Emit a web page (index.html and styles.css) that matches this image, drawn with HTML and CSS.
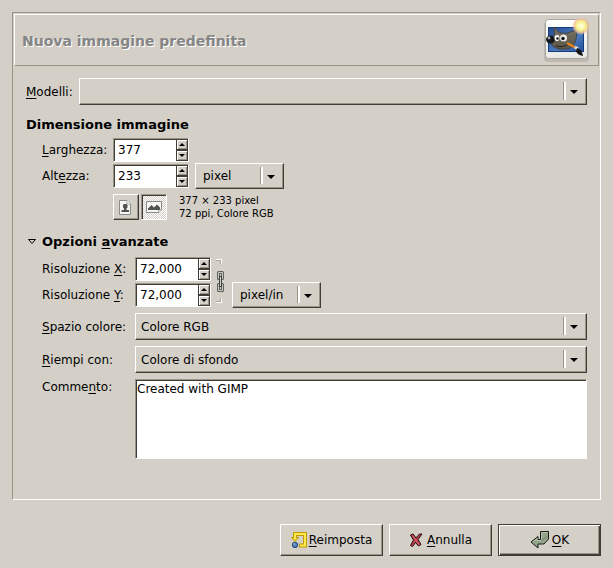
FILE: index.html
```html
<!DOCTYPE html>
<html lang="it">
<head>
<meta charset="utf-8">
<meta name="viewport" content="width=device-width, initial-scale=1">
<title>Nuova immagine predefinita</title>
<link rel="stylesheet" href="styles.css">
</head>
<body>
<form class="dialog">
  <main class="frame">
    <header class="header">
      <h1>Nuova immagine predefinita</h1>
      <svg class="logo" viewBox="0 0 46 46" aria-hidden="true">
        <defs>
          <linearGradient id="paper" x1="0" y1="0" x2="0" y2="1"><stop offset="0" stop-color="#fff"/><stop offset="1" stop-color="#e8e8e6"/></linearGradient>
          <linearGradient id="sky" x1="0" y1="0" x2="1" y2="1"><stop offset="0" stop-color="#244c8e"/><stop offset=".6" stop-color="#4a7ac0"/><stop offset="1" stop-color="#24509a"/></linearGradient>
          <linearGradient id="fur" x1="0" y1="0" x2="0" y2="1"><stop offset="0" stop-color="#7a7466"/><stop offset="1" stop-color="#5a5549"/></linearGradient>
          <radialGradient id="glow"><stop offset="0" stop-color="#fffff0"/><stop offset=".5" stop-color="#f8f48a"/><stop offset=".78" stop-color="#f0c090" stop-opacity=".8"/><stop offset="1" stop-color="#f5c9b0" stop-opacity="0"/></radialGradient>
        </defs>
        <rect x="0" y="3" width="45" height="41" rx="4" fill="#77736b" opacity=".25"/>
        <rect x="1.500" y="1.500" width="42" height="39" rx="3" fill="url(#paper)" stroke="#aaa69f"/>
        <rect x="4.500" y="9.500" width="35" height="24" fill="url(#sky)" stroke="#173b78"/>
        <path d="M10 9L15 14.500Q22 17 28 13.500L32 12.500Q34 22 28 29Q24 32 14 31Q9 29 6 25L8 19L10.500 17Z" fill="url(#fur)" stroke="#3a362e" stroke-width=".7"/>
        <ellipse cx="6.500" cy="21.500" rx="4.500" ry="4" fill="#15181d"/><circle cx="5" cy="20" r="1.400" fill="#a8adb4"/>
        <ellipse cx="13" cy="20" rx="2.500" ry="3" fill="#fff"/><circle cx="13.500" cy="20.500" r="1.300" fill="#111"/>
        <circle cx="19.500" cy="20" r="3.500" fill="#eee"/><circle cx="19" cy="20.500" r="1.700" fill="#111"/>
        <path d="M12 28Q20 30 26 25" fill="none" stroke="#292620"/>
        <path d="M23 25L33 30.500" stroke="#e98520" stroke-width="2"/>
        <path d="M31 29L34 31" stroke="#ddd" stroke-width="3"/>
        <path d="M33 30Q38 31 39 38Q33 37 32 33Z" fill="#151515"/>
        <circle cx="37" cy="8" r="9" fill="url(#glow)"/>
      </svg>
    </header>

    <div class="content">
      <div class="field template">
        <label for="template"><u>M</u>odelli:</label>
        <span class="combo grow"><select id="template"><option></option></select></span>
      </div>

      <h2 class="size-title">Dimensione immagine</h2>
      <div class="rows size">
        <label for="width"><u>L</u>arghezza:</label>
        <div class="line">
          <span class="spin"><input id="width" type="text" value="377"><button type="button" aria-label="Aumenta larghezza"></button><button type="button" class="down" aria-label="Riduci larghezza"></button></span>
        </div>
        <label for="height">Alt<u>e</u>zza:</label>
        <div class="line">
          <span class="spin"><input id="height" type="text" value="233"><button type="button" aria-label="Aumenta altezza"></button><button type="button" class="down" aria-label="Riduci altezza"></button></span>
          <span class="combo unit"><select aria-label="Unità"><option>pixel</option></select></span>
        </div>
        <div class="orientation">
          <button type="button" class="toggle" aria-label="Verticale" aria-pressed="false">
            <svg viewBox="0 0 16 16" aria-hidden="true"><path d="M1.500 1.500H9L12.500 5V15.500H1.500Z" fill="#f6f6f4" stroke="#8c8c86"/><path d="M9 1.500V5H12.500" fill="#fff" stroke="#a5a59f"/><path d="M3.500 13V11H6V9.500L5 8.500V6L6 5H8.500L9.500 6V8.500L8.500 9.500V11H11V13Z" fill="#50534e"/></svg>
          </button>
          <button type="button" class="toggle pressed" aria-label="Orizzontale" aria-pressed="true">
            <svg viewBox="0 0 16 16" aria-hidden="true"><path d="M.5 2.500H15.500V10.500L12.500 13.500H.5Z" fill="#f6f6f4" stroke="#8c8c86"/><path d="M12.500 13.500V10.500H15.500" fill="#fff" stroke="#a5a59f"/><path d="M2 11V9.500L5.500 6L8 8.500L11 5.500L14 8.500V11Z" fill="#50534e"/></svg>
          </button>
          <p class="summary">377 × 233 pixel<br>72 ppi, Colore RGB</p>
        </div>
      </div>

      <details open>
        <summary>
          <svg class="expander" viewBox="0 0 10 8" aria-hidden="true"><path d="M1.500 1.500H8.500L5 5.500Z" fill="#d4d0c8" stroke="#000"/></svg>
          <h2>Opzioni <u>a</u>vanzate</h2>
        </summary>
        <div class="rows advanced">
          <label for="xres">Risoluzione <u>X</u>:</label>
          <div class="resolution">
            <div class="stack">
              <span class="spin"><input id="xres" type="text" value="72,000"><button type="button" aria-label="Aumenta X"></button><button type="button" class="down" aria-label="Riduci X"></button></span>
              <span class="spin"><input id="yres" type="text" value="72,000"><button type="button" aria-label="Aumenta Y"></button><button type="button" class="down" aria-label="Riduci Y"></button></span>
            </div>
            <button type="button" class="chain" aria-label="Collega risoluzioni">
              <svg viewBox="0 0 12 46" aria-hidden="true"><path d="M1 .5H6.500V5M1 43.500H6.500V39" fill="none" stroke="#fff"/><path d="M1 1.500H5.500V5M1 42.500H5.500V39" fill="none" stroke="#aaa397"/><g fill="none"><path d="M3.500 13.500H7.500V19.500H3.500ZM3.500 25.500H7.500V31.500H3.500Z" stroke="#5f615d" stroke-width="3" stroke-linejoin="round"/><path d="M3.500 13.500H7.500V19.500H3.500ZM3.500 25.500H7.500V31.500H3.500Z" stroke="#c9ccc5"/><path d="M5.500 17V28" stroke="#3d3f3b" stroke-width="3"/><path d="M5.500 18V27" stroke="#d5d7d1"/></g></svg>
            </button>
            <span class="combo unit"><select aria-label="Unità di risoluzione"><option>pixel/in</option></select></span>
          </div>
          <label for="yres">Risoluzione <u>Y</u>:</label>
        </div>
        <div class="rows properties">
          <label for="space"><u>S</u>pazio colore:</label>
          <span class="combo"><select id="space"><option>Colore RGB</option></select></span>
          <label for="fill"><u>R</u>iempi con:</label>
          <span class="combo"><select id="fill"><option>Colore di sfondo</option></select></span>
          <label class="top" for="comment">Comme<u>n</u>to:</label>
          <textarea id="comment" spellcheck="false">Created with GIMP</textarea>
        </div>
      </details>
    </div>
  </main>

  <footer class="actions">
    <button type="reset" class="action">
      <svg viewBox="0 0 16 16" aria-hidden="true"><path d="M4 6V2H14V13.500H8" fill="none" stroke="#c09a00" stroke-width="4"/><path d="M.5 5.500H7.500L4 9.500Z" fill="#f4d72e" stroke="#c09a00"/><path d="M4 7V2H14V13.500H9" fill="none" stroke="#fce94f" stroke-width="2"/><circle cx="4" cy="13" r="2.700" fill="#527fb9" stroke="#274b7b"/><circle cx="3.500" cy="12" r="1" fill="#91b2d8"/></svg>
      <span><u>R</u>eimposta</span>
    </button>
    <button type="button" class="action">
      <svg viewBox="0 0 16 16" aria-hidden="true"><path d="M1.500 3L4 2L7 6L10.500 2H13L9 7.500L12 12.500L9.500 14L6.500 10.500L3.500 14.500L1.500 13.500L4.500 8Z" fill="#b9434c" stroke="#24090c"/><path d="M3.500 3.500L10 12.500" stroke="#d56b70"/></svg>
      <span><u>A</u>nnulla</span>
    </button>
    <button type="submit" class="action default">
      <svg class="ok" viewBox="0 0 20 18" aria-hidden="true"><path d="M10.500.5H18.500V8L14 13H8V17L1 11L8 5.500V8.500H10.500Z" fill="#94a58b" stroke="#171c16"/><path d="M11.500 8V1.500H17.500M3 11L7 7.500V9.500H11" fill="none" stroke="#b3c0ab"/><path d="M12 9.500L17.500 5" stroke="#6d8067"/></svg>
      <span><u>O</u>K</span>
    </button>
  </footer>
</form>
</body>
</html>
```
FILE: styles.css
```css
:root {
  --face: #d4d0c8;
  --shade: #9a9486;
  --dark: #403c36;
  --light: #fff;
}

* { box-sizing: border-box; }

body {
  margin: 0;
  background: var(--face);
  color: #000;
  font: 12px/16px "DejaVu Sans", sans-serif;
}

button, input, select, textarea { font: inherit; color: inherit; }
h1, h2, p { margin: 0; }
h2 { font-size: 13px; line-height: 16px; font-weight: bold; }
u { text-underline-offset: 2px; text-decoration-thickness: 1px; }
svg { display: block; flex: none; }

.dialog {
  display: flex;
  flex-direction: column;
  gap: 24px;
  min-height: 100vh;
  padding: 12px;
}

.frame {
  flex: 1;
  padding: 1px;
  border: 1px solid;
  border-color: var(--shade) var(--light) var(--light) var(--shade);
}

.header {
  display: flex;
  align-items: center;
  justify-content: space-between;
  padding: 3px 8px 1px 7px;
  border: 1px solid;
  border-color: var(--light) var(--shade) var(--shade) var(--light);
}

.header h1 {
  color: #858585;
  font-size: 14px;
  line-height: 20px;
  text-shadow: 1px 1px var(--light);
}

.logo { width: 46px; height: 46px; }
.content { padding: 12px; }
.field { display: flex; align-items: center; gap: 6px; }
.grow { flex: 1; }

.combo { position: relative; display: block; height: 27px; }

.combo select {
  display: block;
  width: 100%;
  height: 100%;
  appearance: none;
  padding: 0 28px 0 5px;
  border: 1px solid;
  border-color: var(--light) var(--dark) var(--dark) var(--light);
  border-radius: 0;
  background: var(--face);
  box-shadow: inset -1px -1px var(--shade);
}

.combo::before {
  content: "";
  position: absolute;
  top: 4px;
  right: 21px;
  bottom: 5px;
  width: 2px;
  border-left: 1px solid var(--shade);
  background: var(--light);
  pointer-events: none;
}

.combo::after {
  content: "";
  position: absolute;
  top: 12px;
  right: 9px;
  border: 4px solid transparent;
  border-top-color: #000;
  border-bottom: 0;
  pointer-events: none;
}

.unit { width: 89px; height: 26px; }
.unit select { padding-left: 7px; }
.size-title { margin: 12px 0 4px; }
.rows { display: grid; align-items: center; padding-left: 16px; }
.size { grid-template-columns: 71px 1fr; grid-auto-rows: 26px; }
.line { display: flex; align-items: center; gap: 6px; }

.spin {
  display: grid;
  grid-template: 1fr 1fr / 1fr 12px;
  width: 76px;
  height: 24px;
  border: 1px solid;
  border-color: var(--shade) var(--light) var(--light) var(--shade);
  background: #fff;
  box-shadow: inset 1px 1px var(--dark);
}

.spin input {
  grid-row: 1 / 3;
  min-width: 0;
  width: 100%;
  padding: 0 0 0 4px;
  border: 0;
  background: transparent;
  outline: 0;
}

.spin button {
  display: grid;
  place-items: center;
  padding: 0;
  border: 1px solid var(--dark);
  background: var(--face);
  box-shadow: inset 1px 1px var(--light), inset -1px -1px var(--shade);
}

.spin button::before {
  content: "";
  border: 3px solid transparent;
  border-top: 0;
  border-bottom-color: #000;
}

.spin .down::before {
  border: 3px solid transparent;
  border-bottom: 0;
  border-top-color: #000;
}

.orientation {
  grid-column: 2;
  display: flex;
  align-items: center;
  gap: 2px;
  padding-top: 5px;
  height: 31px;
  align-self: start;
}

.toggle {
  display: grid;
  place-items: center;
  width: 26px;
  height: 26px;
  padding: 0;
  border: 1px solid;
  border-color: var(--light) var(--dark) var(--dark) var(--light);
  background: var(--face);
  box-shadow: inset -1px -1px var(--shade);
}

.toggle svg { width: 16px; height: 16px; }

.pressed {
  border-color: var(--shade) var(--light) var(--light) var(--shade);
  background: repeating-conic-gradient(#fff 0 25%, var(--face) 0 50%) 0 0 / 2px 2px;
  box-shadow: inset 1px 1px var(--dark);
}

.summary { padding-left: 10px; font-size: 10px; line-height: 13px; }
details { margin-top: 19px; }
summary { display: flex; align-items: center; gap: 5px; padding-left: 1px; list-style: none; }
.expander { width: 10px; height: 8px; }
.advanced { grid-template: 26px 26px / 93px 1fr; margin-top: 6px; }
.resolution { grid-area: 1 / 2 / 3 / 3; display: flex; }
.stack { display: grid; grid-auto-rows: 26px; align-items: center; }
.chain { padding: 3px 0; margin: 0 5px 0 4px; border: 0; background: transparent; }
.chain svg { width: 12px; height: 46px; }
.resolution .unit { align-self: end; }
.properties { grid-template-columns: 93px 1fr; row-gap: 6px; margin-top: 5px; }
.top { align-self: start; }

textarea {
  display: block;
  width: 100%;
  height: 80px;
  padding: 1px;
  border: 1px solid;
  border-color: var(--shade) var(--light) var(--light) var(--shade);
  background: #fff;
  box-shadow: inset 1px 1px var(--dark);
  resize: none;
}

.actions { display: flex; justify-content: flex-end; gap: 6px; }

.action {
  display: flex;
  align-items: center;
  justify-content: center;
  gap: 2px;
  width: 103px;
  height: 32px;
  padding: 0;
  border: 1px solid;
  border-color: var(--light) var(--dark) var(--dark) var(--light);
  background: var(--face);
  box-shadow: inset -1px -1px var(--shade);
}

.action svg { width: 16px; height: 16px; }
.action .ok { width: 20px; height: 18px; }

.default {
  border-color: var(--dark);
  box-shadow: inset 1px 1px var(--light), inset -1px -1px var(--dark), inset -2px -2px var(--shade);
}
```
